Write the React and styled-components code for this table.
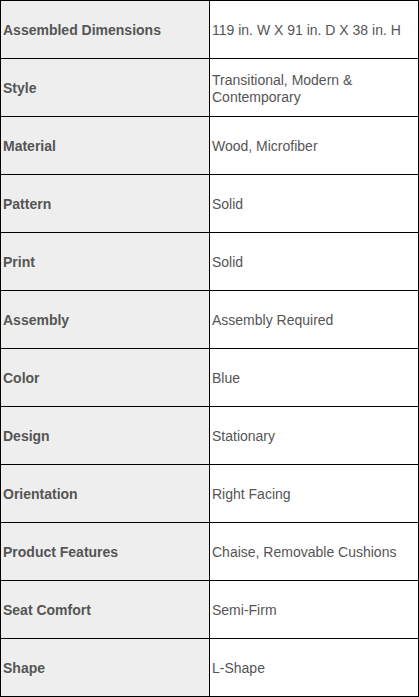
import React from "react";
import styled, { createGlobalStyle } from "styled-components";

const Global = createGlobalStyle`
  html, body { margin: 0; padding: 0; background: #fff; }
  body { font-family: "Liberation Sans", Arial, sans-serif; }
`;

const Table = styled.table`
  border-collapse: collapse;
  table-layout: fixed;
  width: 419px;
  font-family: "Liberation Sans", Arial, sans-serif;
  font-size: 14px;
  color: #555;
`;

const Row = styled.tr`
  height: 58px;
`;

const Label = styled.th`
  width: 204px;
  background: #eee;
  border: 1px solid #000;
  padding: 2px 2px 0 2px;
  text-align: left;
  font-weight: bold;
  vertical-align: middle;
  line-height: 17px;
`;

const Value = styled.td`
  border: 1px solid #000;
  padding: 2px 2px 0 2px;
  text-align: left;
  vertical-align: middle;
  line-height: 17px;
`;

const specs = [
  ["Assembled Dimensions", "119 in. W X 91 in. D X 38 in. H"],
  ["Style", "Transitional, Modern & Contemporary"],
  ["Material", "Wood, Microfiber"],
  ["Pattern", "Solid"],
  ["Print", "Solid"],
  ["Assembly", "Assembly Required"],
  ["Color", "Blue"],
  ["Design", "Stationary"],
  ["Orientation", "Right Facing"],
  ["Product Features", "Chaise, Removable Cushions"],
  ["Seat Comfort", "Semi-Firm"],
  ["Shape", "L-Shape"],
];

export default function App() {
  return (
    <>
      <Global />
      <Table>
        <tbody>
          {specs.map(([k, v]) => (
            <Row key={k}>
              <Label scope="row">{k}</Label>
              <Value>{v}</Value>
            </Row>
          ))}
        </tbody>
      </Table>
    </>
  );
}
